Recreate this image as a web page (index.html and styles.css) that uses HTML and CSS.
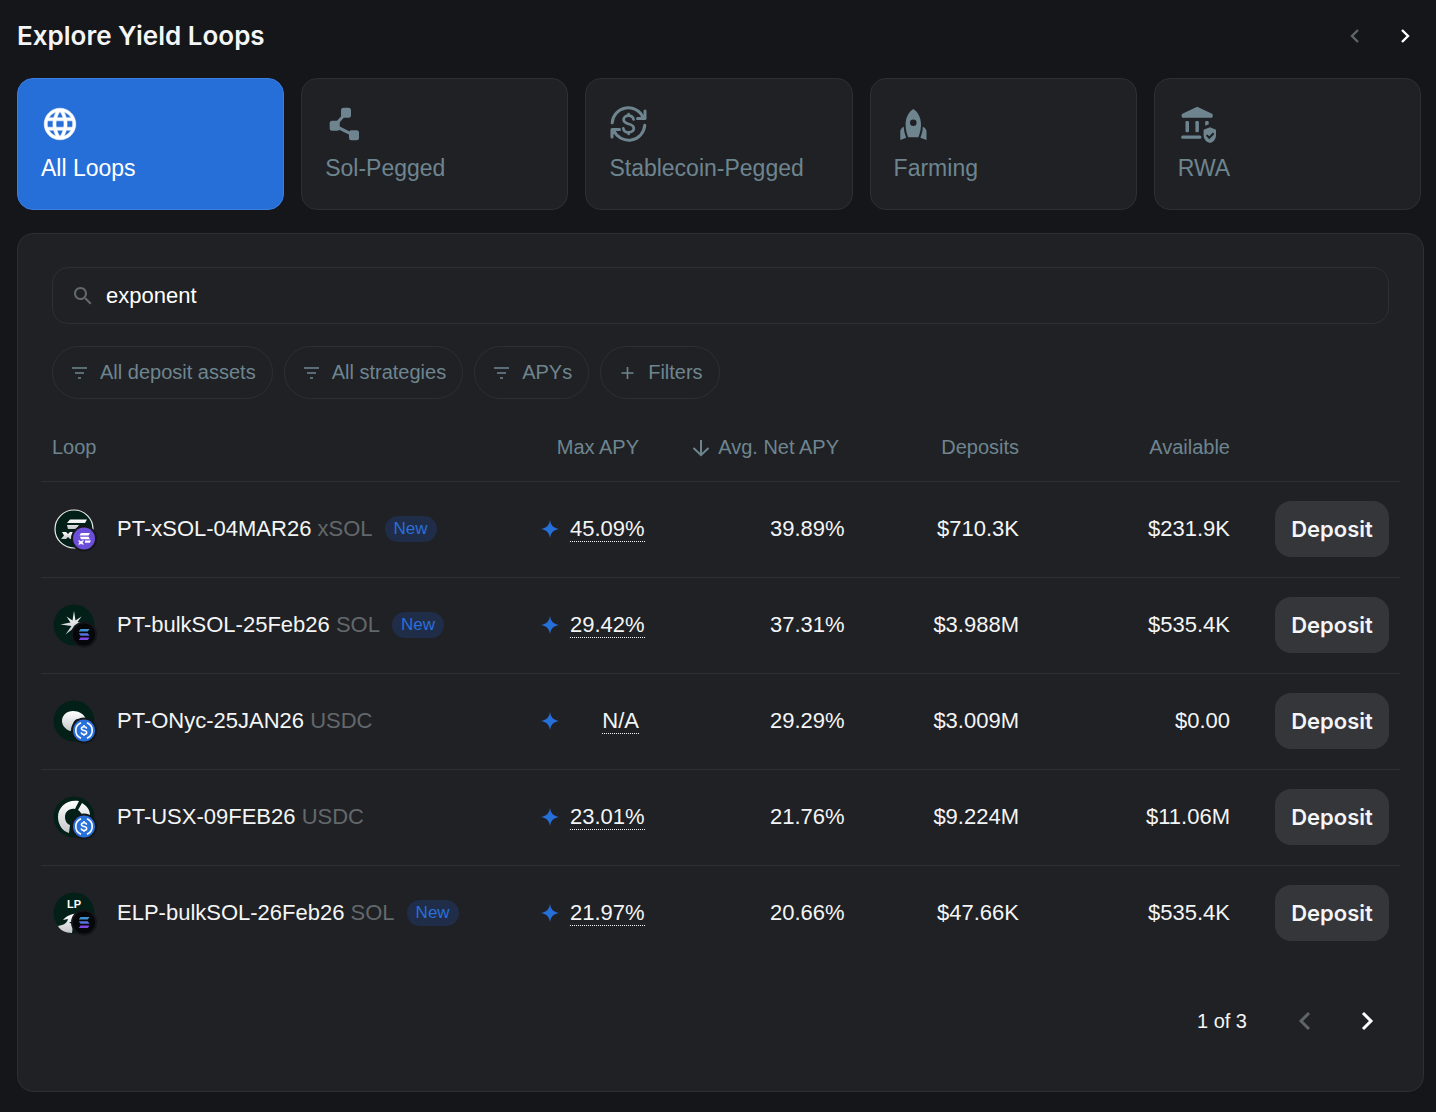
FILE: index.html
```html
<!DOCTYPE html>
<html lang="en">
<head>
    <meta charset="UTF-8">
    <meta name="viewport" content="width=device-width, initial-scale=1.0">
    <title>Explore Yield Loops</title>
    <link rel="stylesheet" href="styles.css">
</head>
<body>
    <!-- shared logos -->
    <svg class="defs" width="0" height="0" aria-hidden="true">
        <defs>
            <linearGradient id="silver" x1="0" y1="0" x2="0" y2="1">
                <stop offset="0" stop-color="#ffffff"/>
                <stop offset="1" stop-color="#c4c7ca"/>
            </linearGradient>
            <g id="badge-sol">
                <circle cx="31" cy="31.500" r="13" fill="#15161a"/>
                <circle cx="31" cy="31.500" r="11" fill="#050708"/>
                <path fill="#3f92cf" d="M27.500 26h9l-1.700 2.600h-9z"/>
                <path fill="#5475dc" d="M25.800 30.200h9l1.700 2.600h-9z"/>
                <path fill="#8049e6" d="M27.500 34.400h9l-1.700 2.600h-9z"/>
            </g>
            <g id="badge-usdc">
                <circle cx="31" cy="31.500" r="13" fill="#15161a"/>
                <circle cx="31" cy="31.500" r="11" fill="#2870da"/>
                <path d="M28 23.800a8.300 8.300 0 0 0 0 15.400M34 23.800a8.300 8.300 0 0 1 0 15.400" fill="none" stroke="#fff" stroke-width="1.600"/>
                <path d="M33.600 29.600c-.2-1.300-1.200-1.900-2.600-1.900s-2.600.7-2.600 1.900c0 2.700 5.300 1.100 5.300 3.900 0 1.200-1.200 1.900-2.700 1.900s-2.600-.7-2.800-2M31 26v1.700M31 35.400v1.700" fill="none" stroke="#fff" stroke-width="1.500"/>
            </g>
            <path id="star" d="M9 0c.9 5.200 3 7.900 9 9-6 1.100-8.100 3.800-9 9-.9-5.200-3-7.900-9-9 6-1.100 8.100-3.800 9-9z"/>
            <path id="filter" d="M1 2h15M4 7h9M7 12h3"/>
        </defs>
    </svg>

    <div class="header">
        <h1>Explore Yield Loops</h1>
        <div class="header-nav">
            <button class="arrow-btn disabled" aria-label="Previous categories">
                <svg width="16" height="16" viewBox="0 0 16 16"><path d="M11 2L5 8l6 6"/></svg>
            </button>
            <button class="arrow-btn" aria-label="Next categories">
                <svg width="16" height="16" viewBox="0 0 16 16"><path d="M5 2l6 6-6 6"/></svg>
            </button>
        </div>
    </div>

    <div class="categories">
        <button class="category active">
            <svg width="38" height="38" viewBox="0 0 24 24" fill="currentColor" stroke="currentColor" stroke-width=".3"><path d="M11.990 2C6.470 2 2 6.480 2 12s4.470 10 9.990 10C17.520 22 22 17.520 22 12S17.520 2 11.990 2zm6.930 6h-2.950c-.32-1.250-.78-2.450-1.380-3.560 1.840.63 3.370 1.910 4.330 3.560zM12 4.040c.83 1.200 1.480 2.530 1.910 3.960h-3.820c.43-1.430 1.080-2.760 1.910-3.960zM4.260 14C4.100 13.360 4 12.690 4 12s.1-1.360.26-2h3.380c-.08.66-.14 1.320-.14 2 0 .68.060 1.340.14 2H4.260zm.82 2h2.950c.32 1.250.78 2.450 1.380 3.560-1.840-.63-3.370-1.900-4.330-3.560zm2.950-8H5.080c.96-1.660 2.490-2.930 4.330-3.560C8.810 5.550 8.350 6.750 8.030 8zM12 19.960c-.83-1.200-1.480-2.530-1.910-3.960h3.820c-.43 1.430-1.080 2.760-1.910 3.960zM14.340 14H9.660c-.09-.66-.16-1.320-.16-2 0-.68.070-1.350.16-2h4.680c.09.65.16 1.320.16 2 0 .68-.07 1.340-.16 2zm.25 5.560c.6-1.110 1.060-2.310 1.380-3.560h2.950c-.96 1.650-2.490 2.930-4.330 3.560zM16.360 14c.08-.66.14-1.320.14-2 0-.68-.06-1.340-.14-2h3.380c.16.64.26 1.310.26 2s-.1 1.360-.26 2h-3.380z"/></svg>
            <span>All Loops</span>
        </button>
        <button class="category">
            <svg width="38" height="38" viewBox="0 0 38 38" fill="currentColor">
                <path d="M21 8L9.700 20.700 29 30.300" fill="none" stroke="currentColor" stroke-width="3"/>
                <rect x="16" y="2.700" width="10" height="10" rx="2.500"/>
                <rect x="4.700" y="15.700" width="10" height="10" rx="2.500"/>
                <rect x="24" y="25.300" width="10" height="10" rx="2.500"/>
            </svg>
            <span>Sol-Pegged</span>
        </button>
        <button class="category">
            <svg width="38" height="38" viewBox="0 0 38 38" fill="none" stroke="currentColor" stroke-width="3" stroke-linecap="round" stroke-linejoin="round">
                <path d="M3.200 17.800A16.200 16.200 0 0 1 34.200 12.500M36 6v7.500h-7.500"/>
                <path d="M35.800 20.200A16.200 16.200 0 0 1 4.800 25.500M3 32v-7.500h7.500"/>
                <path d="M24.600 14.500c-.6-2.600-2.600-3.800-5-3.800-2.900 0-5 1.600-5 4.100 0 5.600 10.200 2.800 10.200 8.500 0 2.500-2.200 4.100-5.200 4.100-2.700 0-4.800-1.300-5.300-4M19.600 9v1.500M19.600 27.500V29" stroke-width="2.700"/>
            </svg>
            <span>Stablecoin-Pegged</span>
        </button>
        <button class="category">
            <svg width="38" height="38" viewBox="0 0 38 38" fill="currentColor">
                <path fill-rule="evenodd" d="M19.300 4c4.500 2.800 7.700 8.500 7.700 15.500 0 5-1.200 9.200-2.600 12.800H14.200c-1.400-3.600-2.600-7.800-2.600-12.800C11.600 12.500 14.800 6.800 19.300 4zm0 10.400a3.300 3.300 0 1 0 0 6.600 3.300 3.300 0 0 0 0-6.600z"/>
                <path d="M9.800 21.800c.1 4 1 7.500 2.400 10.900L6.300 35v-8.500c0-2 1.500-3.800 3.500-4.700zM28.800 21.800c-.1 4-1 7.500-2.400 10.900l6.100 2.300v-8.500c0-2-1.500-3.800-3.700-4.700z"/>
            </svg>
            <span>Farming</span>
        </button>
        <button class="category">
            <svg width="38" height="38" viewBox="0 0 38 38" fill="currentColor">
                <path d="M19.200 1.700L34 8.800c1 .5 1.200 3.900-.4 3.900H4.800c-1.600 0-1.500-3.300-.4-3.900z"/>
                <rect x="7.500" y="16" width="3.500" height="11.200" rx="1.200"/>
                <rect x="17.400" y="16" width="3.500" height="11.200" rx="1.200"/>
                <path d="M27.200 17c0-1.400 3.500-1.400 3.500 0v2.200l-3.500 1.600z"/>
                <rect x="3.200" y="30.500" width="20.200" height="3.200" rx="1.500"/>
                <path fill-rule="evenodd" d="M32 22.200l6 2.500v5.300c0 4.200-2.400 7-6 8-3.800-1-6.400-3.800-6.400-8v-5.300zM31.200 34.200l5.200-5.200-1.500-1.500-3.700 3.700-1.900-1.800-1.400 1.400z"/>
            </svg>
            <span>RWA</span>
        </button>
    </div>

    <div class="panel">
        <div class="search-box">
            <svg width="24" height="24" viewBox="0 0 24 24" fill="currentColor"><path d="M15.500 14h-.79l-.28-.27C15.410 12.590 16 11.110 16 9.500 16 5.910 13.090 3 9.500 3S3 5.910 3 9.500 5.910 16 9.500 16c1.610 0 3.090-.59 4.230-1.570l.27.28v.79l5 4.990L20.490 19l-4.990-5zm-6 0C7.010 14 5 11.990 5 9.500S7.010 5 9.500 5 14 7.010 14 9.500 11.990 14 9.500 14z"/></svg>
            <input type="text" id="search-input" aria-label="Search loops" value="exponent">
        </div>

        <div class="filters">
            <button class="chip"><svg width="17" height="14" viewBox="0 0 17 14"><use href="#filter"/></svg>All deposit assets</button>
            <button class="chip"><svg width="17" height="14" viewBox="0 0 17 14"><use href="#filter"/></svg>All strategies</button>
            <button class="chip"><svg width="17" height="14" viewBox="0 0 17 14"><use href="#filter"/></svg>APYs</button>
            <button class="chip"><svg width="17" height="14" viewBox="0 0 17 14"><path d="M2.500 7h12M8.500 1v12"/></svg>Filters</button>
        </div>

        <table class="loops">
            <thead>
                <tr>
                    <th class="col-loop">Loop</th>
                    <th class="col-max">Max APY</th>
                    <th class="col-avg"><svg width="18" height="18" viewBox="0 0 18 18"><path d="M9 1v15M1.500 9L9 16.200 16.500 9"/></svg>Avg. Net APY</th>
                    <th class="col-deposits">Deposits</th>
                    <th class="col-available">Available</th>
                    <th class="col-action"></th>
                </tr>
            </thead>
            <tbody>
                <tr>
                    <td>
                        <div class="loop">
                            <svg width="44" height="44" viewBox="0 0 44 44">
                                <circle cx="21" cy="22" r="19" fill="#032018" stroke="#e8ebea" stroke-width="1.200"/>
                                <g fill="url(#silver)">
                                    <path d="M17 12.500h17l-2 3.500H14zM14 18h12l-3 4h-8z"/>
                                    <path d="M9 25h4l2 2 2-2h4v7h-4l-2-2-2 2H8l3-3.500z"/>
                                </g>
                                <circle cx="31" cy="31.500" r="13" fill="#15161a"/>
                                <circle cx="31" cy="31.500" r="11" fill="#6c4fd9"/>
                                <path fill="#fff" d="M28 26h9l-1.500 2.400h-9zM27 29.800h8.500l1.500 2.400h-9zM32 33.500h6l-1.200 2.200h-4.800zM25 33.500h2l1 1 1-1h2l-1.500 2 1.500 2h-2l-1-1-1 1h-2l1.500-2z"/>
                            </svg>
                            <span class="name">PT-xSOL-04MAR26 <span class="asset">xSOL</span></span>
                            <span class="new">New</span>
                        </div>
                    </td>
                    <td><div class="apy"><svg width="18" height="18" viewBox="0 0 18 18"><use href="#star"/></svg><span class="value"><span class="dotted">45.09%</span></span></div></td>
                    <td><div class="apy"><span class="value">39.89%</span></div></td>
                    <td>$710.3K</td>
                    <td>$231.9K</td>
                    <td class="action"><button class="deposit">Deposit</button></td>
                </tr>
                <tr>
                    <td>
                        <div class="loop">
                            <svg width="44" height="44" viewBox="0 0 44 44">
                                <circle cx="21" cy="22" r="20.500" fill="#032018"/>
                                <path fill="url(#silver)" d="M21 8l1.500 9.500 6-4-4 5.500 9 1.500-9 2 3 6-6-4-9 7 6-8.500-11-1.500 10-2-4-6 6 4z"/>
                                <use href="#badge-sol"/>
                            </svg>
                            <span class="name">PT-bulkSOL-25Feb26 <span class="asset">SOL</span></span>
                            <span class="new">New</span>
                        </div>
                    </td>
                    <td><div class="apy"><svg width="18" height="18" viewBox="0 0 18 18"><use href="#star"/></svg><span class="value"><span class="dotted">29.42%</span></span></div></td>
                    <td><div class="apy"><span class="value">37.31%</span></div></td>
                    <td>$3.988M</td>
                    <td>$535.4K</td>
                    <td class="action"><button class="deposit">Deposit</button></td>
                </tr>
                <tr>
                    <td>
                        <div class="loop">
                            <svg width="44" height="44" viewBox="0 0 44 44">
                                <circle cx="21" cy="22" r="20.500" fill="#032018"/>
                                <path fill="url(#silver)" d="M33 20C31 15 26 12 20 12 14 12 9 16 9 22c0 4 3 8 8 10l5-2c-3-4-2-8 2-10z"/>
                                <use href="#badge-usdc"/>
                            </svg>
                            <span class="name">PT-ONyc-25JAN26 <span class="asset">USDC</span></span>
                        </div>
                    </td>
                    <td><div class="apy"><svg width="18" height="18" viewBox="0 0 18 18"><use href="#star"/></svg><span class="value"><span class="dotted">N/A</span></span></div></td>
                    <td><div class="apy"><span class="value">29.29%</span></div></td>
                    <td>$3.009M</td>
                    <td>$0.00</td>
                    <td class="action"><button class="deposit">Deposit</button></td>
                </tr>
                <tr>
                    <td>
                        <div class="loop">
                            <svg width="44" height="44" viewBox="0 0 44 44">
                                <circle cx="21" cy="22" r="20.500" fill="#032018"/>
                                <path fill="url(#silver)" d="M26 6l-4 8c-6-1-10 3-10 8 0 4 2 7 5 8l-1 8C9 36 5 29 5 22 5 12 14 4 26 6zM29 8c5 3 8 7 8 12h-8c-1-2-2-4-4-5z"/>
                                <use href="#badge-usdc"/>
                            </svg>
                            <span class="name">PT-USX-09FEB26 <span class="asset">USDC</span></span>
                        </div>
                    </td>
                    <td><div class="apy"><svg width="18" height="18" viewBox="0 0 18 18"><use href="#star"/></svg><span class="value"><span class="dotted">23.01%</span></span></div></td>
                    <td><div class="apy"><span class="value">21.76%</span></div></td>
                    <td>$9.224M</td>
                    <td>$11.06M</td>
                    <td class="action"><button class="deposit">Deposit</button></td>
                </tr>
                <tr>
                    <td>
                        <div class="loop">
                            <svg width="44" height="44" viewBox="0 0 44 44">
                                <circle cx="21" cy="22" r="20.500" fill="#032018"/>
                                <text class="lp" x="21" y="17" text-anchor="middle">LP</text>
                                <path fill="url(#silver)" d="M20 23c2-.8 5-.8 7 0l-6 8h-5l4 3-1 8c-7 0-12-3-14-7 6-1 9-3 10-7l-5 1c2-3 6-5 10-6z"/>
                                <use href="#badge-sol"/>
                            </svg>
                            <span class="name">ELP-bulkSOL-26Feb26 <span class="asset">SOL</span></span>
                            <span class="new">New</span>
                        </div>
                    </td>
                    <td><div class="apy"><svg width="18" height="18" viewBox="0 0 18 18"><use href="#star"/></svg><span class="value"><span class="dotted">21.97%</span></span></div></td>
                    <td><div class="apy"><span class="value">20.66%</span></div></td>
                    <td>$47.66K</td>
                    <td>$535.4K</td>
                    <td class="action"><button class="deposit">Deposit</button></td>
                </tr>
            </tbody>
        </table>

        <div class="pagination">
            <span class="page-info">1 of 3</span>
            <button class="arrow-btn disabled" aria-label="Previous page">
                <svg width="24" height="24" viewBox="0 0 24 24"><path d="M16 4L8 12l8 8"/></svg>
            </button>
            <button class="arrow-btn" aria-label="Next page">
                <svg width="24" height="24" viewBox="0 0 24 24"><path d="M8 4l8 8-8 8"/></svg>
            </button>
        </div>
    </div>
</body>
</html>
```
FILE: styles.css
```css
* {
  box-sizing:border-box;
}
body {
  margin:0;
  padding:17px 12px 20px 17px;
  background:#15161a;
  color:#f4f5f6;
  font-family:"Liberation Sans", Arial, sans-serif;
  font-size:22px;
}
button {
  padding:0;
  border:none;
  background:none;
  color:inherit;
  font:inherit;
  cursor:pointer;
}
svg {
  display:block;
  flex:none;
}
.defs {
  position:absolute;
}

/* header */
.header {
  display:flex;
  align-items:center;
  justify-content:space-between;
  padding-right:11px;
}
.header h1 {
  margin:0;
  font-family:Inter, sans-serif;
  font-size:26px;
  font-weight:600;
  line-height:38px;
}
.header-nav {
  display:flex;
  gap:34px;
}
.arrow-btn svg {
  fill:none;
  stroke:#fff;
  stroke-width:2.4;
}
.arrow-btn.disabled svg {
  stroke:#5d6569;
}

/* category cards */
.categories {
  display:flex;
  gap:17px;
  margin:23px 3px 23px 0;
}
.category {
  flex:1;
  display:flex;
  flex-direction:column;
  align-items:flex-start;
  gap:12px;
  height:132px;
  padding:26px 23px;
  border:1px solid #2e2f33;
  border-radius:16px;
  background:#202124;
  color:#6e8590;
  font-size:23px;
  line-height:26px;
}
.category.active {
  border-color:#3c7de0;
  background:#276fd8;
  color:#fff;
}

/* main panel */
.panel {
  padding:33px 23px 58px;
  border:1px solid #2e2f33;
  border-radius:16px;
  background:#202124;
}
.search-box {
  display:flex;
  align-items:center;
  gap:11px;
  height:57px;
  margin:0 11px;
  padding:0 18px;
  border:1px solid #2e2f33;
  border-radius:16px;
  color:#62696d;
}
.search-box input {
  flex:1;
  padding:0;
  border:none;
  outline:none;
  background:none;
  color:#fff;
  font:inherit;
}
.filters {
  display:flex;
  gap:11px;
  margin:22px 11px 0;
}
.chip {
  display:flex;
  align-items:center;
  gap:12px;
  height:53px;
  padding:0 16px 0 18px;
  border:1px solid #2e2f33;
  border-radius:27px;
  color:#6e8590;
  font-size:20px;
}
.chip svg {
  fill:none;
  stroke:currentColor;
  stroke-width:1.6;
}

/* table */
.loops {
  width:100%;
  margin-top:15px;
  border-collapse:collapse;
  table-layout:fixed;
}
.loops th {
  height:67px;
  padding:0 12px 0 0;
  border-bottom:1px solid #2e2f33;
  color:#6e8590;
  font-size:20px;
  font-weight:400;
  text-align:right;
  white-space:nowrap;
}
.loops .col-loop {
  padding-left:11px;
  text-align:left;
}
.col-max {
  width:130px;
}
.col-avg {
  width:200px;
}
.col-avg svg {
  display:inline-block;
  margin-right:8px;
  vertical-align:-3px;
  fill:none;
  stroke:currentColor;
  stroke-width:2;
}
.col-deposits {
  width:180px;
}
.col-available {
  width:211px;
}
.col-action {
  width:158px;
}
.loops td {
  height:96px;
  padding:0 12px 0 0;
  border-bottom:1px solid #2e2f33;
  text-align:right;
  white-space:nowrap;
}
.loops tr:last-child td {
  border-bottom:none;
}
.loops .action {
  padding-right:11px;
}
.loop {
  display:flex;
  align-items:center;
  padding-left:12px;
}
.loop svg {
  margin-right:20px;
  overflow:visible;
}
.lp {
  fill:#fff;
  font-size:11px;
  font-weight:700;
}
.asset {
  color:#62686b;
}
.new {
  margin-left:12px;
  padding:0 9px;
  border-radius:13px;
  background:#202d48;
  color:#2b6fd9;
  font-size:17px;
  line-height:26px;
}
.apy {
  display:flex;
  align-items:center;
  justify-content:flex-end;
  gap:11px;
}
.apy svg {
  fill:#276fd8;
}
.value {
  width:69px;
}
.dotted {
  border-bottom:1px dotted #f4f5f6;
}
.deposit {
  width:114px;
  height:56px;
  border-radius:16px;
  background:#35363a;
  font-family:Inter, sans-serif;
  font-size:22px;
  font-weight:600;
}

/* pagination */
.pagination {
  display:flex;
  align-items:center;
  justify-content:flex-end;
  gap:38px;
  margin-top:48px;
  padding-right:21px;
}
.page-info {
  margin-right:8px;
  font-size:20px;
  line-height:24px;
}
.pagination svg {
  stroke-width:3;
}
```
